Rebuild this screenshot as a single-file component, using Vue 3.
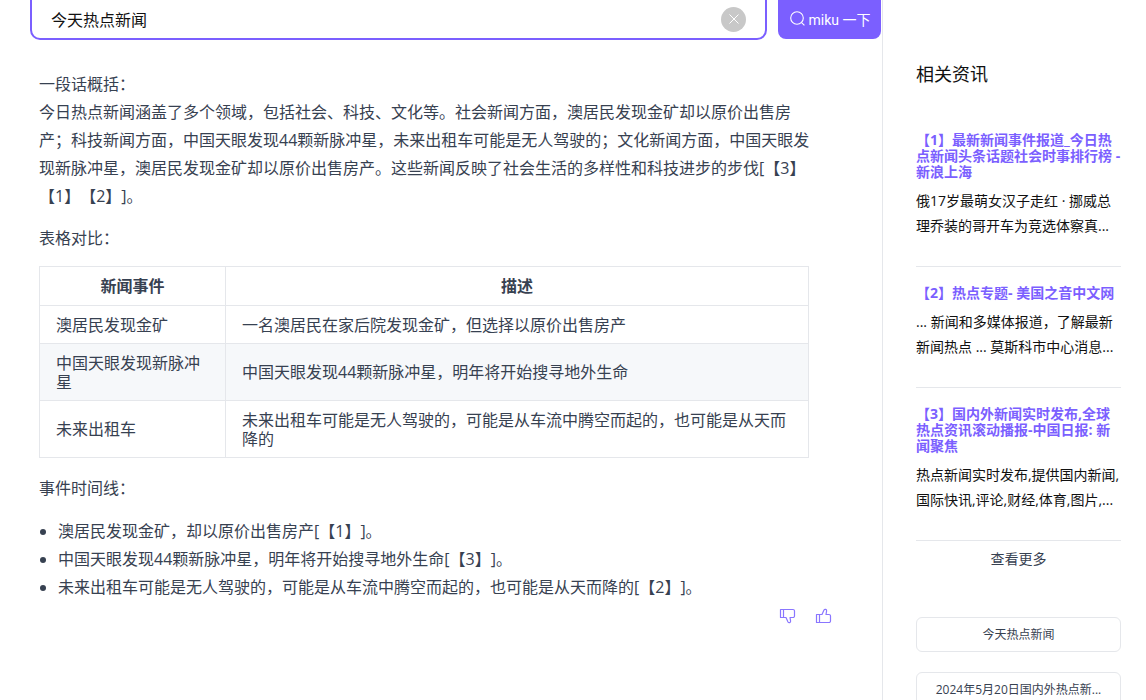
<template>
  <div class="page">
    <main class="main">
      <div class="search">
        <div class="search-box">
          <span class="query">今天热点新闻</span>
          <span class="clear">
            <svg width="12" height="12" viewBox="0 0 12 12"><path d="M1.5 1.5l9 9M10.5 1.5l-9 9" stroke="#fff" stroke-width="1" fill="none" /></svg>
          </span>
        </div>
        <button class="search-btn">
          <svg width="17" height="17" viewBox="0 0 17 17" fill="none" stroke="#fff" stroke-width="1.1">
            <circle cx="8" cy="8" r="6.3" />
            <path d="M12.6 12.6l2.8 2.8" />
          </svg>
          <span>miku 一下</span>
        </button>
      </div>

      <div class="answer">
        <p class="block">
          一段话概括：<br />
          今日热点新闻涵盖了多个领域，包括社会、科技、文化等。社会新闻方面，澳居民发现金矿却以原价出售房产；科技新闻方面，中国天眼发现44颗新脉冲星，未来出租车可能是无人驾驶的；文化新闻方面，中国天眼发现新脉冲星，澳居民发现金矿却以原价出售房产。这些新闻反映了社会生活的多样性和科技进步的步伐[【3】【1】【2】]。
        </p>
        <p class="block">表格对比：</p>
        <table class="table">
          <thead>
            <tr>
              <th class="col1">新闻事件</th>
              <th>描述</th>
            </tr>
          </thead>
          <tbody>
            <tr v-for="row in rows" :key="row.name">
              <td>{{ row.name }}</td>
              <td>{{ row.desc }}</td>
            </tr>
          </tbody>
        </table>
        <p class="block timeline">事件时间线：</p>
        <ul class="list">
          <li v-for="item in events" :key="item">{{ item }}</li>
        </ul>
        <div class="actions">
          <svg width="18" height="18" viewBox="0 0 18 18" fill="none" stroke="#8a76ff" stroke-width="1.2" stroke-linejoin="round">
            <path d="M1.5 2.5h3v8h-3zM4.5 2.5h9.5a1.5 1.5 0 0 1 1.5 1.5v5a1.5 1.5 0 0 1-1.5 1.5h-3l.6 3.6a1.4 1.4 0 0 1-2.6.9l-2-4.5h-2.5" />
          </svg>
          <svg width="18" height="18" viewBox="0 0 18 18" fill="none" stroke="#8a76ff" stroke-width="1.2" stroke-linejoin="round">
            <path d="M1.5 7.5h3v8h-3zM4.5 15.5h9.5a1.5 1.5 0 0 0 1.5-1.5v-5a1.5 1.5 0 0 0-1.5-1.5h-3l.6-3.6a1.4 1.4 0 0 0-2.6-.9l-2 4.5h-2.5" />
          </svg>
        </div>
      </div>
    </main>

    <aside class="aside">
      <h2 class="aside-title">相关资讯</h2>
      <div class="news">
        <div v-for="item in news" :key="item.title" class="news-item">
          <div class="news-title">{{ item.title }}</div>
          <div class="news-desc">{{ item.desc }}</div>
        </div>
      </div>
      <div class="more">查看更多</div>
      <div class="tags">
        <div class="tag">今天热点新闻</div>
        <div class="tag">2024年5月20日国内外热点新...</div>
      </div>
    </aside>
  </div>
</template>

<script setup>
const rows = [
  { name: "澳居民发现金矿", desc: "一名澳居民在家后院发现金矿，但选择以原价出售房产" },
  { name: "中国天眼发现新脉冲星", desc: "中国天眼发现44颗新脉冲星，明年将开始搜寻地外生命" },
  { name: "未来出租车", desc: "未来出租车可能是无人驾驶的，可能是从车流中腾空而起的，也可能是从天而降的" },
];

const events = [
  "澳居民发现金矿，却以原价出售房产[【1】]。",
  "中国天眼发现44颗新脉冲星，明年将开始搜寻地外生命[【3】]。",
  "未来出租车可能是无人驾驶的，可能是从车流中腾空而起的，也可能是从天而降的[【2】]。",
];

const news = [
  {
    title: "【1】最新新闻事件报道_今日热点新闻头条话题社会时事排行榜 - 新浪上海",
    desc: "俄17岁最萌女汉子走红 · 挪威总理乔装的哥开车为竞选体察真...",
  },
  {
    title: "【2】热点专题- 美国之音中文网",
    desc: "... 新闻和多媒体报道，了解最新新闻热点 ... 莫斯科市中心消息...",
  },
  {
    title: "【3】国内外新闻实时发布,全球热点资讯滚动播报-中国日报: 新闻聚焦",
    desc: "热点新闻实时发布,提供国内新闻,国际快讯,评论,财经,体育,图片,...",
  },
];
</script>

<style>
html,
body {
  margin: 0;
  height: 100%;
  overflow: hidden;
  background: #fff;
}
</style>

<style scoped>
.page {
  display: flex;
  height: 700px;
  overflow: hidden;
  font-family: "Open Sans", "Noto Sans CJK SC", sans-serif;
  color: #374151;
  text-spacing-trim: space-all;
}
.main {
  width: 883px;
  flex-shrink: 0;
  box-sizing: border-box;
  border-right: 1px solid #e5e7eb;
}
.search {
  display: flex;
  gap: 11px;
  margin: -10px 1px 0 30px;
}
.search-box {
  flex: 1;
  height: 50px;
  box-sizing: border-box;
  border: 2px solid #7b5fff;
  border-radius: 10px;
  display: flex;
  align-items: center;
  justify-content: space-between;
  padding: 8px 19px 0 19px;
}
.query {
  font-size: 16px;
  color: #111;
  margin-top: -1px;
}
.clear {
  width: 25px;
  height: 25px;
  border-radius: 50%;
  background: #c8c8c8;
  display: flex;
  align-items: center;
  justify-content: center;
}
.search-btn {
  width: 103px;
  height: 49px;
  border: 0;
  border-radius: 8px;
  background: #7b5fff;
  color: #fff;
  font: 14px Roboto, "Noto Sans CJK SC", sans-serif;
  display: flex;
  align-items: center;
  justify-content: center;
  gap: 3px;
  padding: 8px 0 0;
}
.answer {
  width: 771px;
  padding: 30px 0 0 39px;
  font-size: 16px;
  line-height: 28px;
}
.block {
  margin: 0 0 14px;
}
.table {
  width: 770px;
  border-collapse: collapse;
  line-height: 18.5px;
  margin: 14px 0 16px;
}
.table th,
.table td {
  border: 1px solid #e5e7eb;
  padding: 10px 16px 9px;
  text-align: left;
}
.table th {
  text-align: center;
  font-weight: 600;
  padding: 9.5px 16px;
}
.col1 {
  width: 153px;
}
.table tbody tr:nth-child(2) {
  background: #f6f8fa;
}
.timeline {
  margin-bottom: 15px;
}
.list {
  margin: 0;
  padding-left: 19px;
}
.actions {
  display: flex;
  justify-content: flex-end;
  gap: 18px;
  margin: 6px -23px 0 0;
}
.aside {
  flex: 1;
  min-width: 0;
  padding: 0 25px 0 33px;
}
.aside-title {
  margin: 63px 0 0;
  font-size: 18px;
  font-weight: 400;
  line-height: 22px;
  color: #111;
}
.news {
  margin-top: 47px;
}
.news-item {
  padding: 0 0 28px;
  margin-bottom: 18px;
  border-bottom: 1px solid #e5e7eb;
}
.news-title {
  font-size: 14px;
  line-height: 16px;
  font-weight: 700;
  color: #7b5fff;
}
.news-desc {
  font-size: 14px;
  line-height: 25px;
  color: #111;
  margin-top: 8px;
  display: -webkit-box;
  -webkit-box-orient: vertical;
  -webkit-line-clamp: 2;
  overflow: hidden;
}
.more {
  font-size: 14px;
  text-align: center;
  margin-top: -10px;
  line-height: 20px;
}
.tags {
  margin-top: 48px;
  display: flex;
  flex-direction: column;
  gap: 20px;
}
.tag {
  height: 35px;
  box-sizing: border-box;
  border: 1px solid #e5e7eb;
  border-radius: 6px;
  font-size: 12px;
  line-height: 33px;
  text-align: center;
}
</style>
